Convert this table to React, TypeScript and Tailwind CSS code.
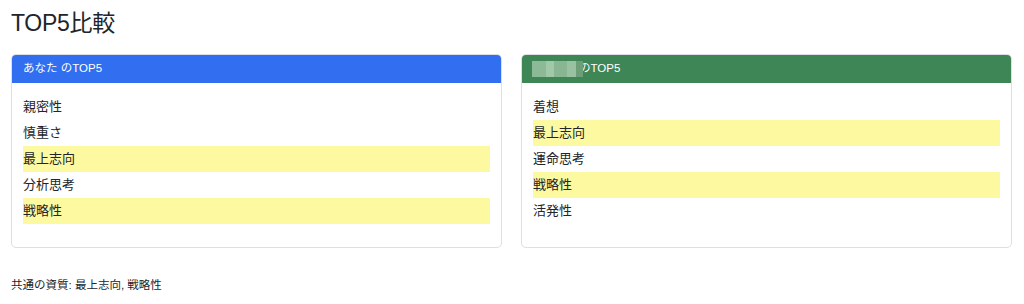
import React from "react";

const left = [
  { t: "親密性", h: false },
  { t: "慎重さ", h: false },
  { t: "最上志向", h: true },
  { t: "分析思考", h: false },
  { t: "戦略性", h: true },
];
const right = [
  { t: "着想", h: false },
  { t: "最上志向", h: true },
  { t: "運命思考", h: false },
  { t: "戦略性", h: true },
  { t: "活発性", h: false },
];

function Rows({ items }: { items: { t: string; h: boolean }[] }) {
  return (
    <div className="flex flex-col px-[11px] pt-[11px] pb-[23px]">
      {items.map((it, i) => (
        <div
          key={i}
          className={
            "h-[26px] flex items-center text-[13px] text-[#212529] " +
            (it.h ? "bg-[#fdf9a1]" : "")
          }
        >
          {it.t}
        </div>
      ))}
    </div>
  );
}

export default function App() {
  return (
    <div
      className="w-[1024px] h-[304px] bg-white px-[11px] pt-[8px] overflow-hidden"
      style={{ fontFamily: '"Liberation Sans", "Noto Sans CJK JP", sans-serif' }}
    >
      <h1 className="text-[23px] leading-[30px] text-[#212529] font-normal mb-[16px] tracking-[-0.3px]">
        TOP5比較
      </h1>
      <div className="grid grid-cols-2 gap-[19px] w-[1001px]">
        <div className="border border-[#dcdfe3] rounded-[5px] overflow-hidden bg-white">
          <div className="h-[29px] -mt-px bg-[#316ef0] flex items-center px-[11px] text-[11.5px] text-white">
            あなた のTOP5
          </div>
          <Rows items={left} />
        </div>
        <div className="border border-[#dcdfe3] rounded-[5px] overflow-hidden bg-white">
          <div className="h-[29px] -mt-px bg-[#3f8656] flex items-center px-[10px] text-[11.5px] text-white">
            <div className="relative z-10 flex h-[16px]">
              <div className="w-[14px] bg-[#8cb996]" />
              <div className="w-[8px] bg-[#a2c8aa]" />
              <div className="w-[13px] bg-[#88b692]" />
              <div className="w-[9px] bg-[#9ac2a2]" />
              <div className="w-[7px] bg-[#6c9f78]" />
            </div>
            <span className="-ml-[4px]">のTOP5</span>
          </div>
          <Rows items={right} />
        </div>
      </div>
      <div className="mt-[29px] text-[11.5px] leading-[16px] text-[#212529]">
        共通の資質: 最上志向, 戦略性
      </div>
    </div>
  );
}
